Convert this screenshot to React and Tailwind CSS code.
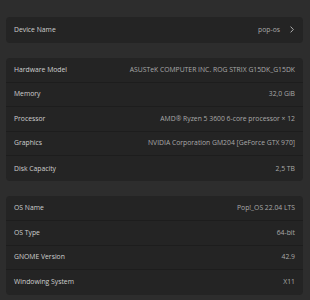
import React from 'react';

const hardware = [
  ['Hardware Model', 'ASUSTeK COMPUTER INC. ROG STRIX G15DK_G15DK'],
  ['Memory', '32,0 GiB'],
  ['Processor', 'AMD® Ryzen 5 3600 6-core processor × 12'],
  ['Graphics', 'NVIDIA Corporation GM204 [GeForce GTX 970]'],
  ['Disk Capacity', '2,5 TB'],
];

const software = [
  ['OS Name', 'Pop!_OS 22.04 LTS'],
  ['OS Type', '64-bit'],
  ['GNOME Version', '42.9'],
  ['Windowing System', 'X11'],
];

function Row({ label, value, last }) {
  return (
    <div
      className={`flex h-[24.6px] items-center justify-between px-[8px] ${
        last ? '' : 'border-b border-[#1d1d1d]'
      }`}
    >
      <span className="text-[#cfcfcf]">{label}</span>
      <span className="text-[#a9a9a9]">{value}</span>
    </div>
  );
}

function Card({ rows }) {
  return (
    <div className="rounded-[4px] bg-[#242424]">
      {rows.map(([label, value], i) => (
        <Row key={label} label={label} value={value} last={i === rows.length - 1} />
      ))}
    </div>
  );
}

export default function App() {
  return (
    <div
      className="h-[300px] w-[310px] overflow-hidden bg-[#2d2d2d] pl-[6px] pr-[7px] pt-[17px] text-[6.8px]"
      style={{ fontFamily: '"Open Sans", "Noto Sans", sans-serif' }}
    >
      <div className="flex flex-col gap-[15.5px]">
        {/* device name */}
        <div className="flex h-[25.5px] items-center justify-between rounded-[4px] bg-[#242424] pl-[8px] pr-[9px]">
          <span className="text-[#cfcfcf]">Device Name</span>
          <div className="flex items-center gap-[10px]">
            <span className="text-[#a9a9a9]">pop-os</span>
            <svg width="4" height="7" viewBox="0 0 4 7" fill="none">
              <path d="M0.6 0.6 L3.3 3.5 L0.6 6.4" stroke="#bdbdbd" strokeWidth="0.9" />
            </svg>
          </div>
        </div>

        <Card rows={hardware} />
        <Card rows={software} />
      </div>
    </div>
  );
}
